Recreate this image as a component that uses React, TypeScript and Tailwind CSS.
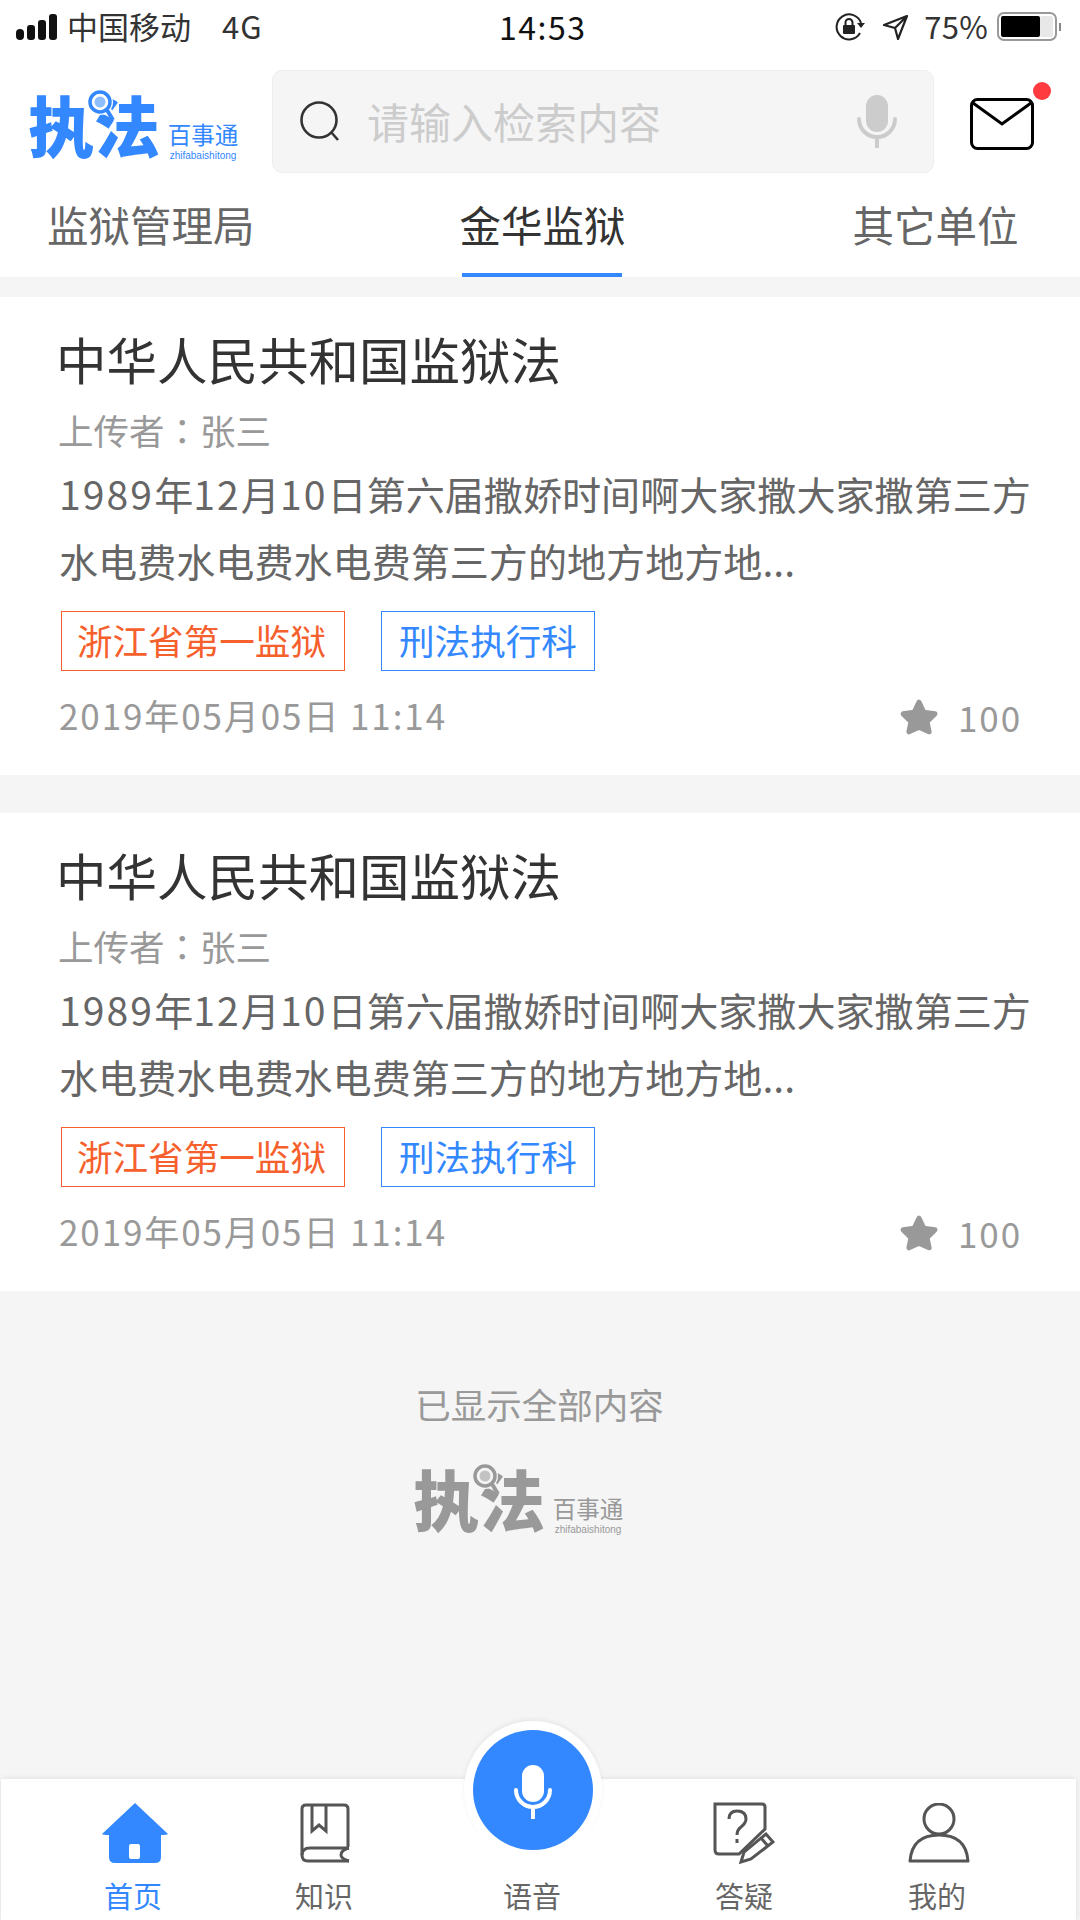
import React from "react";

const CJK = "font-['Noto_Sans_CJK_SC','Noto_Sans',sans-serif]";

function Logo({ main, bg, ml }: { main: string; bg: string; ml: string }) {
  const isBlue = main === "#3388ff";
  return (
    <div className={`flex items-end ${ml}`}>
      <div className="relative w-[132px] h-[66px]">
        <div
          className={`${isBlue ? "text-[#3388ff]" : "text-[#999999]"} flex w-[132px] h-[66px] items-center justify-between text-[66px] leading-[66px] font-black`}
        >
          <span className="-mt-[3px]">执</span>
          <span className="-mt-[3px]">法</span>
        </div>
        <svg className="absolute left-[60px] -top-[1px]" width="30" height="38" viewBox="0 0 30 38">
          <circle cx="12" cy="12" r="13" fill={bg} />
          <circle cx="12" cy="12" r="10" fill="none" stroke={main} strokeWidth="3.5" />
          <circle cx="12" cy="12" r="5.5" fill={main} opacity="0.55" />
          <path d="M19 20 L25 30" stroke={main} strokeWidth="4" />
        </svg>
      </div>
      <div className="ml-[8px] -mb-[5px] w-[70px] flex flex-col items-center">
        <div className={`${isBlue ? "text-[#3388ff]" : "text-[#999999]"} text-[23.5px] leading-[26px] whitespace-nowrap`}>百事通</div>
        <div className={`${isBlue ? "text-[#3388ff]" : "text-[#999999]"} text-[10px] leading-[13px] mt-[2px] font-['Liberation_Sans',sans-serif] whitespace-nowrap`}>
          zhifabaishitong
        </div>
      </div>
    </div>
  );
}

function Star() {
  return (
    <svg width="40" height="38" viewBox="0 0 38 36">
      <path
        d="M19 4 L23.5 13.5 L34 15 L26.5 22.5 L28.5 32 L19 27.5 L9.5 32 L11.5 22.5 L4 15 L14.5 13.5 Z"
        fill="#999999"
        stroke="#999999"
        strokeWidth="5"
        strokeLinejoin="round"
      />
    </svg>
  );
}

function D({ children }: { children: React.ReactNode }) {
  return <span className="tracking-[2.1px]">{children}</span>;
}

function Card() {
  return (
    <div className="bg-white h-[478px] pt-[31px] pl-[59px] pr-[45px]">
      <div className="text-[50.5px] leading-[60px] text-[#333333] -ml-[3px]">中华人民共和国监狱法</div>
      <div className="mt-[20px] text-[35.5px] leading-[44px] text-[#999999] -ml-[1px]">
        上传者<span className="font-['Noto_Sans_CJK_TC',sans-serif]">：</span>张三
      </div>
      <div className="mt-[8px] text-[39.1px] leading-[67px] text-[#666666] whitespace-nowrap">
        <div>
          <D>1989</D>年<D>12</D>月<D>10</D>日第六届撒娇时间啊大家撒大家撒第三方
        </div>
        <div>水电费水电费水电费第三方的地方地方地...</div>
      </div>
      <div className="mt-[17px] flex gap-[36px] ml-[2px]">
        <div className="h-[60px] w-[284px] border border-[#f6602d] text-[#f6602d] text-[35.6px] leading-[56px] text-center pr-[3px]">
          浙江省第一监狱
        </div>
        <div className="h-[60px] w-[214px] border border-[#3388ff] text-[#3388ff] text-[35.6px] leading-[56px] text-center">
          刑法执行科
        </div>
      </div>
      <div className="mt-[24px] flex items-center justify-between h-[44px] text-[#999999] text-[35px] leading-[44px] tracking-[1.9px]">
        <div className="mb-[5px]">2019年05月05日 11:14</div>
        <div className="flex items-center gap-[19px] mr-[13px]">
          <Star />
          <span>100</span>
        </div>
      </div>
    </div>
  );
}

function NavItem({ label, ml, active, children }: { label: string; ml: string; active?: boolean; children?: React.ReactNode }) {
  return (
    <div className={`w-[100px] flex flex-col items-center ${ml}`}>
      <div className="h-[60px] flex items-center justify-center">{children}</div>
      <div className={`mt-[12px] text-[29px] leading-[40px] ${active ? "text-[#3388ff]" : "text-[#666666]"}`}>{label}</div>
    </div>
  );
}

export default function App() {
  return (
    <div className={`${CJK} relative w-[1080px] h-[1920px] overflow-hidden bg-[#f5f5f5] flex flex-col`}>
      <div className="bg-white">
        {/* status bar */}
        <div className="h-[54px] flex items-center relative text-[#333333]">
          <svg className="ml-[16px]" width="42" height="26" viewBox="0 0 42 26">
            <rect x="0" y="15" width="8" height="11" rx="4" fill="#111" />
            <rect x="11" y="11" width="8" height="15" rx="3" fill="#111" />
            <rect x="22" y="6" width="8" height="20" rx="3" fill="#111" />
            <rect x="33" y="0" width="8" height="26" rx="3" fill="#111" />
          </svg>
          <span className="ml-[9px] text-[31px] leading-[40px] -mt-[2px]">中国移动</span>
          <span className="ml-[31px] text-[31px] leading-[40px] tracking-[1px] -mt-[2px]">4G</span>
          <span className="absolute left-[499px] top-[6px] text-[32px] leading-[40px] text-[#111111] tracking-[1.5px]">14:53</span>
          <svg className="ml-auto" width="31" height="28" viewBox="0 0 31 28">
            <path d="M25 20 A12.5 12.5 0 1 1 26 10" fill="none" stroke="#222" strokeWidth="2" />
            <path d="M22 10 L30 10 L26 15 Z" fill="#222" />
            <rect x="8" y="12" width="12" height="9" rx="1" fill="#222" />
            <path d="M10.5 12 V9.5 A3.5 3.5 0 0 1 17.5 9.5 V12" fill="none" stroke="#222" strokeWidth="2" />
          </svg>
          <svg className="ml-[17px]" width="25" height="25" viewBox="0 0 25 25">
            <path d="M24 1 L1 10 L12 13 L15 24 Z M24 1 L12 13" fill="none" stroke="#222" strokeWidth="2.2" strokeLinejoin="round" />
          </svg>
          <span className="ml-[16px] text-[31px] leading-[40px] -mt-[2px] tracking-[0.3px]">75%</span>
          <svg className="ml-[9px] mr-[16px]" width="67" height="30" viewBox="0 0 67 30">
            <rect x="1" y="1" width="58" height="27" rx="6" fill="#fff" stroke="#999" strokeWidth="2" />
            <rect x="4" y="4" width="39" height="21" rx="2" fill="#000" />
            <rect x="43" y="4" width="13" height="21" rx="2" fill="#e8e8e8" />
            <rect x="62" y="11" width="2" height="8" fill="#888" />
          </svg>
        </div>

        {/* header */}
        <div className="h-[118px] pt-[16px] flex items-start relative">
          <div className="w-[272px] shrink-0 pt-[21px]">
            <Logo main="#3388ff" bg="#ffffff" ml="ml-[28px]" />
          </div>
          <div className="w-[662px] h-[103px] bg-[#f5f5f5] border border-[#eeeeee] rounded-[10px] flex items-center pl-[27px] pr-[36px]">
            <svg width="42" height="42" viewBox="0 0 42 42">
              <circle cx="19" cy="19" r="17.5" fill="none" stroke="#333" strokeWidth="2.6" />
              <path d="M31 31 L38 39" stroke="#333" strokeWidth="2.6" />
            </svg>
            <span className="ml-[25px] -mt-[1px] text-[42px] leading-[60px] text-[#cccccc]">请输入检索内容</span>
            <svg className="ml-auto" width="40" height="53" viewBox="0 0 40 53">
              <rect x="9" y="0" width="22" height="37" rx="11" fill="#cccccc" />
              <path d="M2 24 A18 18 0 0 0 38 24 M20 42 V52" fill="none" stroke="#cccccc" strokeWidth="4" strokeLinecap="round" />
            </svg>
          </div>
          <svg className="ml-[36px] mt-[28px]" width="64" height="52" viewBox="0 0 64 52">
            <rect x="1.5" y="1.5" width="61" height="49" rx="6" fill="#fff" stroke="#000" strokeWidth="3" />
            <path d="M3 5 L32 26 L61 5" fill="none" stroke="#000" strokeWidth="3" />
          </svg>
          <div className="absolute left-[1033px] top-[28px] w-[18px] h-[18px] rounded-full bg-[#ff3b3f]" />
        </div>

        {/* tabs */}
        <div className="h-[105px] flex items-start text-[41.5px] leading-[56px] text-[#666666] relative">
          <div className="ml-[47px] mt-[24px]">监狱管理局</div>
          <div className="ml-[205px] h-[105px] flex flex-col justify-between items-center">
            <span className="mt-[24px] text-[#333333]">金华监狱</span>
            <div className="w-[160px] h-[4px] bg-[#3388ff] mr-[2px]" />
          </div>
          <div className="ml-[227px] mt-[24px]">其它单位</div>
        </div>
      </div>

      {/* content */}
      <div className="flex-1 pt-[20px]">
        <Card />
        <div className="h-[38px]" />
        <Card />
        <div className="mt-[88px] text-center text-[35.5px] leading-[50px] text-[#999999] ml-[-1px]">已显示全部内容</div>
        <div className="mt-[36px]">
          <Logo main="#999999" bg="#f5f5f5" ml="ml-[413px]" />
        </div>
      </div>

      {/* bottom nav */}
      <div className="relative h-[141px] ml-[1px] mr-[4px] bg-white shadow-[0_0_6px_rgba(0,0,0,0.1)] pt-[24px] flex">
        <NavItem label="首页" ml="ml-[82px]" active>
          <svg className="ml-[4px]" width="66" height="60" viewBox="0 0 66 60">
            <path d="M33 0 L66 31 Q65 32 59 32 V54 Q59 60 53 60 H13 Q7 60 7 54 V32 Q1 32 0 31 Z" fill="#3388ff" />
            <rect x="27" y="41" width="11" height="15" rx="2" fill="#fff" />
          </svg>
        </NavItem>
        <NavItem label="知识" ml="ml-[91px]">
          <svg className="ml-[2px]" width="50" height="60" viewBox="0 0 50 60" fill="none" stroke="#555" strokeWidth="3">
            <path d="M48 44 V6 Q48 2 44 2 H6 Q2 2 2 6 V52" />
            <path d="M49 45 H10 Q2 45 2 52 Q2 58 8 58 H49" />
            <path d="M49 45 Q41 47 41 52 Q41 56 49 58" />
            <path d="M12 2 V28 L19 22 L26 28 V2" />
          </svg>
        </NavItem>
        <NavItem label="语音" ml="ml-[108px]" />
        <NavItem label="答疑" ml="ml-[112px]">
          <svg width="62" height="62" viewBox="0 0 62 62" fill="none" stroke="#555" strokeWidth="3">
            <path d="M2 2 H49 Q52 2 52 5 V27 L26 52 H6 Q2 52 2 48 Z" />
            <path d="M16 17 Q16 9 24 9 Q33 9 33 17 Q33 21 28 25 Q24 28 24 33" />
            <path d="M24 37 V41" />
            <path d="M28 60 L31 50 L53 32 L60 40 L38 57 Z M48 36 L55 44" />
          </svg>
        </NavItem>
        <NavItem label="我的" ml="ml-[93px]">
          <svg className="ml-[4px]" width="62" height="60" viewBox="0 0 62 60" fill="none" stroke="#555" strokeWidth="3">
            <circle cx="31" cy="16" r="15" />
            <path d="M2 58 Q4 32 31 32 Q58 32 60 58 Z" strokeLinejoin="round" />
          </svg>
        </NavItem>
        <div className="absolute left-[463px] -top-[58px] w-[138px] h-[138px] rounded-full bg-white flex items-center justify-center shadow-[0_-2px_4px_rgba(0,0,0,0.06)]">
          <div className="w-[120px] h-[120px] rounded-full bg-[#3388ff] flex items-center justify-center">
            <svg className="mt-[3px]" width="40" height="54" viewBox="0 0 40 54">
              <rect x="9" y="0" width="22" height="37" rx="11" fill="#fff" />
              <path d="M3 25 A17 17 0 0 0 37 25 M20 43 V53" fill="none" stroke="#fff" strokeWidth="4" strokeLinecap="round" />
            </svg>
          </div>
        </div>
      </div>
    </div>
  );
}
